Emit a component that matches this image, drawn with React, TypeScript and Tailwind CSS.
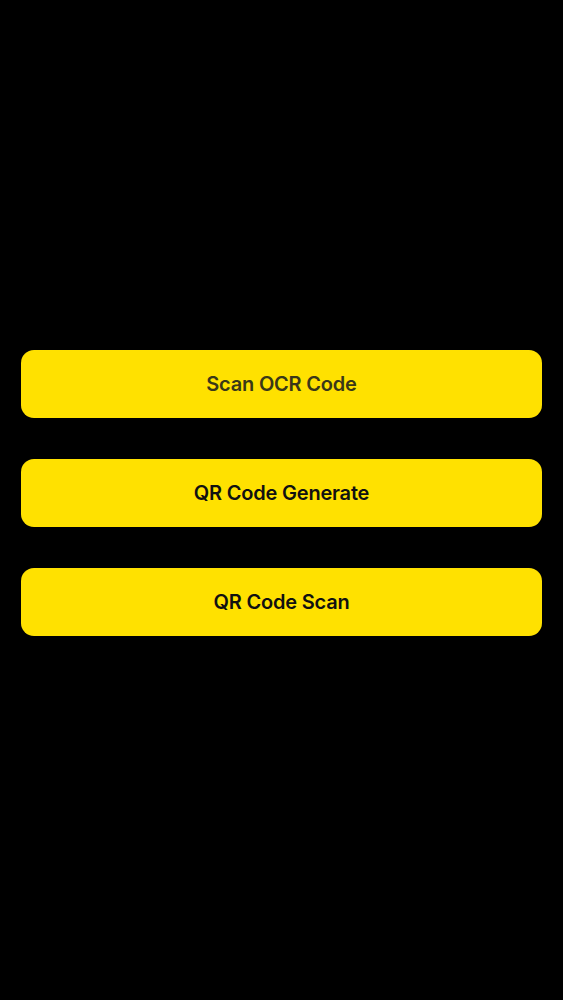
export default function App() {
  const items = [
    { label: 'Scan OCR Code', muted: true },
    { label: 'QR Code Generate', muted: false },
    { label: 'QR Code Scan', muted: false },
  ];

  return (
    <main
      className="min-h-screen w-full bg-black flex flex-col gap-[41px] px-[21px] pt-[350px]"
      style={{ fontFamily: 'Inter, "Noto Sans", sans-serif' }}
    >
      {items.map((item) => (
        <button
          key={item.label}
          className={`h-[68px] w-full rounded-[13px] bg-[#ffe100] text-[20px] font-semibold tracking-[-0.2px] ${
            item.muted ? 'text-[#3a3818]' : 'text-[#111111]'
          }`}
        >
          {item.label}
        </button>
      ))}
    </main>
  );
}
